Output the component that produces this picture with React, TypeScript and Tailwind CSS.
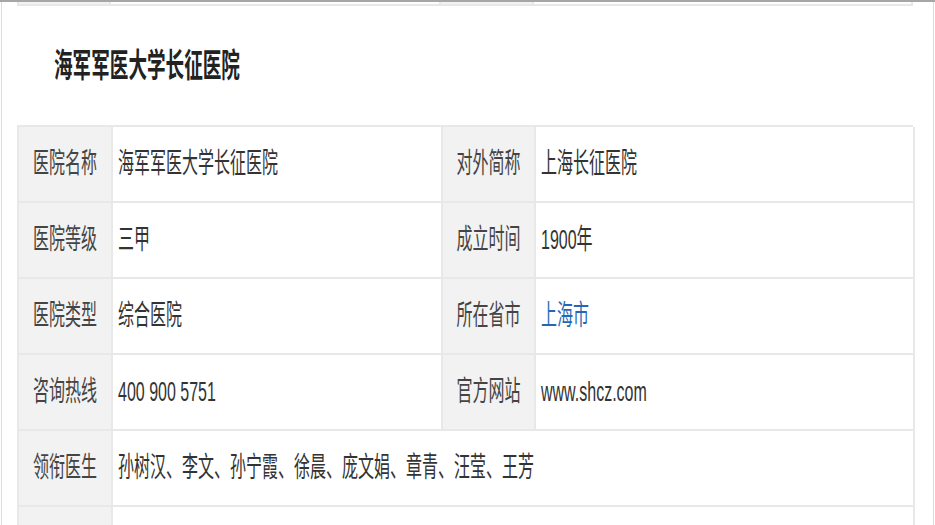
import React from "react";

type Row =
  | { kind: "pair"; a: string; av: string; b: string; bv: string; bvBlue?: boolean }
  | { kind: "wide"; a: string; av: string };

const rows: Row[] = [
  { kind: "pair", a: "医院名称", av: "海军军医大学长征医院", b: "对外简称", bv: "上海长征医院" },
  { kind: "pair", a: "医院等级", av: "三甲", b: "成立时间", bv: "1900年" },
  { kind: "pair", a: "医院类型", av: "综合医院", b: "所在省市", bv: "上海市", bvBlue: true },
  { kind: "pair", a: "咨询热线", av: "400 900 5751", b: "官方网站", bv: "www.shcz.com" },
  { kind: "wide", a: "领衔医生", av: "孙树汉、李文、孙宁霞、徐晨、庞文娟、章青、汪莹、王芳" },
  { kind: "wide", a: "", av: "" },
];

function Tall({ children, className = "" }: { children: React.ReactNode; className?: string }) {
  return <span className={"inline-block scale-y-[1.75] " + className}>{children}</span>;
}

function Label({ text }: { text: string }) {
  return (
    <div className="h-[76px] flex items-center justify-center bg-[#f2f2f2] border-r-2 border-b-2 border-[#e8e8e8] text-[#444]">
      <Tall>{text}</Tall>
    </div>
  );
}

function Value({ text, blue, wide }: { text: string; blue?: boolean; wide?: boolean }) {
  return (
    <div
      className={
        "h-[76px] flex items-center pl-[5px] bg-white border-r-2 border-b-2 border-[#e8e8e8] " +
        (wide ? "col-span-3 " : "") +
        (blue ? "text-[#2368b4]" : "text-[#333]")
      }
    >
      <Tall>{text}</Tall>
    </div>
  );
}

export default function App() {
  return (
    <div
      className="w-[935px] h-[525px] overflow-hidden bg-white border-t-2 border-[#a6a6a6]"
      style={{ fontFamily: '"Liberation Sans", "Noto Sans CJK SC", sans-serif' }}
    >
      <div className="ml-[1px] w-[933px] h-full border-x border-[#dcdcdc] pl-[15px]">
        {/* tail of the previous table */}
        <div className="w-[896px] grid grid-cols-[94px_330px_93px_379px] border-b-2 border-[#e8e8e8]">
          <div className="h-[2px] bg-[#f2f2f2] border-l-2 border-r-2 border-[#e8e8e8]" />
          <div className="h-[2px] border-r-2 border-[#e8e8e8]" />
          <div className="h-[2px] bg-[#f2f2f2] border-r-2 border-[#e8e8e8]" />
          <div className="h-[2px] border-r-2 border-[#e8e8e8]" />
        </div>

        <div className="h-[119px] flex items-center pl-[37px]">
          <Tall className="text-[18.6px] font-bold text-[#222]">海军军医大学长征医院</Tall>
        </div>

        <div className="w-[896px] grid grid-cols-[94px_330px_93px_379px] border-l-2 border-t-2 border-[#e8e8e8] text-[16px]">
          {rows.map((r, i) =>
            r.kind === "pair" ? (
              <React.Fragment key={i}>
                <Label text={r.a} />
                <Value text={r.av} />
                <Label text={r.b} />
                <Value text={r.bv} blue={r.bvBlue} />
              </React.Fragment>
            ) : (
              <React.Fragment key={i}>
                <Label text={r.a} />
                <Value text={r.av} wide />
              </React.Fragment>
            )
          )}
        </div>
      </div>
    </div>
  );
}
